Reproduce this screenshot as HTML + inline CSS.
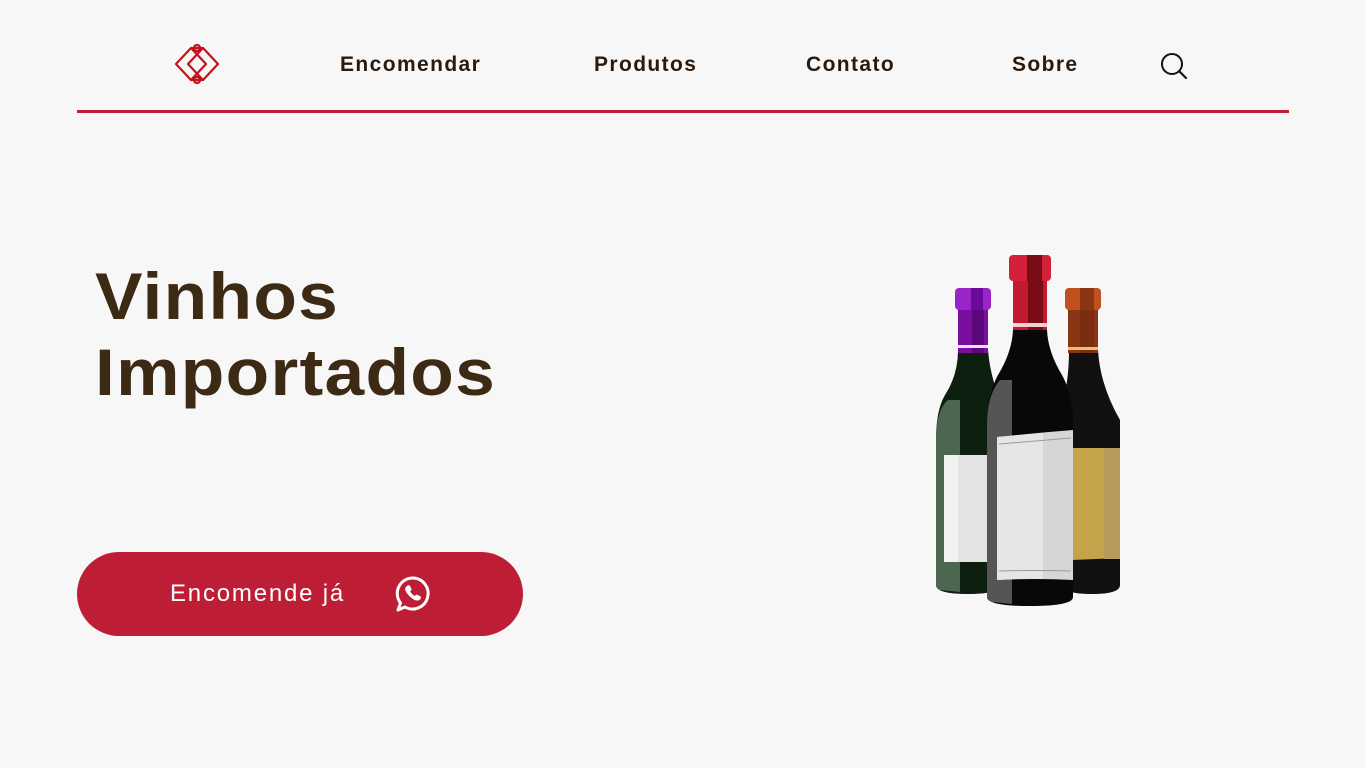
<!DOCTYPE html>
<html><head><meta charset="utf-8"><style>
html,body{margin:0;padding:0;width:1366px;height:768px;background:#f7f7f7;overflow:hidden;font-family:"Liberation Sans",sans-serif}
.nav a{position:absolute;top:53px;font-weight:bold;font-size:21px;color:#2a1a0e;text-decoration:none;letter-spacing:1.4px}
.line{position:absolute;left:77px;top:110px;width:1212px;height:3px;background:#bd1e35}
h1{position:absolute;left:95px;top:258px;margin:0;font-size:66px;line-height:76px;color:#3d2a14;font-weight:bold;letter-spacing:1.2px;transform:scaleX(1.08);transform-origin:0 0}
.btn{position:absolute;left:77px;top:552px;width:446px;height:84px;border-radius:42px;background:#bd1e35}
.btn span{position:absolute;left:93px;top:28px;color:#fff;font-size:24px;letter-spacing:1.8px}
</style></head><body>
<svg style="position:absolute;left:174px;top:44px" width="46" height="40" viewBox="0 0 46 40">
<g fill="none" stroke="#c4121c" stroke-width="2.2" stroke-linejoin="round">
<path d="M17 4 L2 20 L17 36 L32 20 Z"/>
<path d="M29 4 L44 20 L29 36 L14 20 Z"/>
<path d="M17 4 L29 4 M17 36 L29 36"/>
<circle cx="23" cy="4" r="3"/><circle cx="23" cy="36" r="3"/>
</g></svg>
<div class="nav"><a style="left:340px">Encomendar</a><a style="left:594px">Produtos</a><a style="left:806px">Contato</a><a style="left:1012px">Sobre</a></div>
<svg style="position:absolute;left:1159px;top:51px" width="30" height="30" viewBox="0 0 30 30"><circle cx="13" cy="13" r="10" fill="none" stroke="#111" stroke-width="2"/><path d="M20.5 20.5 L27 27" stroke="#111" stroke-width="2.2" stroke-linecap="round"/></svg>
<div class="line"></div>
<h1>Vinhos<br>Importados</h1>
<div class="btn"><span>Encomende já</span>
<svg style="position:absolute;left:317px;top:23px" width="38" height="38" viewBox="0 0 38 38"><path d="M19 3 A15.5 15.5 0 1 1 11 32 L4 35 L6.5 28 A15.5 15.5 0 0 1 19 3 Z" fill="none" stroke="#fff" stroke-width="3" stroke-linejoin="round"/><path d="M13 11 c1-1 2.5-1 3 0 l1.5 3 c0.3 1-0.8 1.8-1.3 2.4 c1 2 2.5 3.6 4.6 4.6 c0.6-0.5 1.4-1.6 2.4-1.3 l3 1.5 c1 0.5 1 2 0 3 c-1.5 1.6-4 2-7 0 c-3-2-5.5-4.5-7.2-7.5 c-1.4-2.6-0.8-4.6 1-5.7 z" fill="#fff"/></svg>
</div>
<svg style="position:absolute;left:0;top:0" width="1366" height="768">
<path d="M1069 308 L1069 350 Q1069 380 1063 400 L1063 585 Q1063 594 1092 594 Q1120 594 1120 585 L1120 420 Q1100 385 1098 350 L1098 308 Z" fill="#111"/>
<rect x="1068" y="308" width="30" height="45" fill="#8a3514"/>
<rect x="1080" y="308" width="14" height="45" fill="#7a2d10"/>
<rect x="1068" y="347" width="30" height="3" fill="#e8c070"/>
<rect x="1065" y="288" width="36" height="22" rx="4" fill="#c0501e"/>
<rect x="1080" y="288" width="14" height="22" fill="#8a3514"/>
<path d="M1072 448 L1120 448 L1120 558 L1072 560 Z" fill="#c4a34a"/>
<rect x="1104" y="448" width="16" height="111" fill="#b89a5a"/>
<path d="M958 308 L958 350 Q958 375 945 395 Q936 410 936 440 L936 585 Q936 594 968 594 Q1000 594 1000 585 L1000 400 Q990 375 988 350 L988 308 Z" fill="#0d2010"/>
<path d="M936 440 Q936 410 948 400 L960 400 L960 592 L940 590 Q936 588 936 585 Z" fill="#4d6650"/>
<rect x="958" y="308" width="30" height="45" fill="#7a0ea0"/>
<rect x="972" y="308" width="12" height="45" fill="#5a087a"/>
<rect x="958" y="345" width="30" height="3" fill="#f0e0f0"/>
<rect x="955" y="288" width="36" height="22" rx="4" fill="#9a24c8"/>
<rect x="971" y="288" width="12" height="22" fill="#6a0a9a"/>
<rect x="944" y="455" width="50" height="107" fill="#e4e4e4"/>
<rect x="944" y="455" width="14" height="107" fill="#f2f2f2"/>
<path d="M1013 278 L1013 330 Q1012 352 998 375 Q987 395 987 425 L987 597 Q987 606 1030 606 Q1073 606 1073 597 L1073 425 Q1073 395 1062 375 Q1048 352 1047 330 L1047 278 Z" fill="#080808"/>
<path d="M987 425 Q987 395 1000 380 L1012 380 L1012 604 L992 602 Q987 600 987 597 Z" fill="#555"/>
<rect x="1013" y="278" width="34" height="52" fill="#c41a30"/>
<rect x="1028" y="278" width="15" height="52" fill="#7a0c18"/>
<rect x="1013" y="323" width="34" height="4" fill="#f0d0d0"/>
<rect x="1009" y="255" width="42" height="26" rx="4" fill="#d42038"/>
<rect x="1027" y="255" width="15" height="26" fill="#7a0c18"/>
<path d="M997 437 Q1035 433 1073 430 L1073 580 Q1035 578 997 580 Z" fill="#d6d6d6"/>
<path d="M997 437 Q1030 434 1043 433 L1043 579 Q1020 578 997 580 Z" fill="#e6e6e6"/>
<path d="M999 444 Q1035 441 1071 438 M999 571 Q1035 570 1071 571" stroke="#999" stroke-width="1" fill="none"/>
</svg>
</body></html>
